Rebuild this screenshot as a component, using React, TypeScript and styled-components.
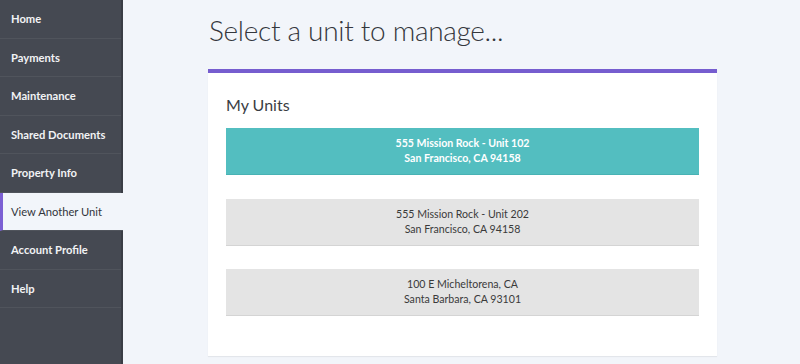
import styled, { createGlobalStyle } from 'styled-components'

const GlobalStyle = createGlobalStyle`
  html, body {
    margin: 0;
    padding: 0;
    background: #f2f5fa;
  }
  body {
    font-family: Lato, 'Open Sans', sans-serif;
  }
`

interface Unit {
  id: string
  street: string
  city: string
}

const navItems = [
  'Home',
  'Payments',
  'Maintenance',
  'Shared Documents',
  'Property Info',
  'View Another Unit',
  'Account Profile',
  'Help',
]

const units: Unit[] = [
  { id: '102', street: '555 Mission Rock - Unit 102', city: 'San Francisco, CA 94158' },
  { id: '202', street: '555 Mission Rock - Unit 202', city: 'San Francisco, CA 94158' },
  { id: 'sb', street: '100 E Micheltorena, CA', city: 'Santa Barbara, CA 93101' },
]

export default function App() {
  const activeNav = 'View Another Unit'
  const selectedUnit = '102'

  return (
    <>
      <GlobalStyle />
      <Layout>
        <Sidebar>
          {navItems.map((item) => (
            <NavItem key={item} $active={item === activeNav}>
              {item}
            </NavItem>
          ))}
        </Sidebar>

        <Main>
          <Title>Select a unit to manage...</Title>
          <Card>
            <CardTitle>My Units</CardTitle>
            <UnitList>
              {units.map((unit) => (
                <UnitButton key={unit.id} $selected={unit.id === selectedUnit}>
                  <span>{unit.street}</span>
                  <span>{unit.city}</span>
                </UnitButton>
              ))}
            </UnitList>
          </Card>
        </Main>
      </Layout>
    </>
  )
}

const Layout = styled.div`
  display: flex;
  width: 800px;
  height: 364px;
  overflow: hidden;
`

const Sidebar = styled.nav`
  display: flex;
  flex-direction: column;
  width: 121px;
  flex-shrink: 0;
  background: #454952;
  border-right: 2px solid #3a3d45;
`

const NavItem = styled.div<{ $active?: boolean }>`
  display: flex;
  align-items: center;
  height: 37.5px;
  padding-left: ${({ $active }) => ($active ? '8px' : '11px')};
  border-bottom: 1px solid #50545c;
  border-left: ${({ $active }) => ($active ? '3px solid #7b5fd3' : 'none')};
  background: ${({ $active }) => ($active ? '#f2f5fa' : 'transparent')};
  color: ${({ $active }) => ($active ? '#33363c' : '#f2f3f5')};
  font-size: 11.2px;
  font-weight: ${({ $active }) => ($active ? 400 : 700)};
  margin-right: ${({ $active }) => ($active ? '-2px' : '0')};
`

const Main = styled.main`
  display: flex;
  flex-direction: column;
  padding: 12px 0 0 85px;
  width: 509px;
`

const Title = styled.h1`
  margin: 0 0 20px 1px;
  font-size: 28px;
  line-height: 37px;
  font-weight: 300;
  color: #34373d;
  letter-spacing: -0.3px;
`

const Card = styled.section`
  background: #ffffff;
  border-top: 4px solid #765dcf;
  padding: 21px 18px 40px;
  box-shadow: 0 1px 1px rgba(0, 0, 0, 0.06);
`

const CardTitle = styled.h2`
  margin: 0 0 12px;
  font-size: 16px;
  line-height: 22px;
  font-weight: 400;
  color: #3a3d43;
`

const UnitList = styled.div`
  display: flex;
  flex-direction: column;
  gap: 23.5px;
`

const UnitButton = styled.div<{ $selected?: boolean }>`
  display: flex;
  flex-direction: column;
  align-items: center;
  justify-content: center;
  height: 46px;
  border-bottom: 1px solid ${({ $selected }) => ($selected ? '#48b2b4' : '#d4d4d4')};
  background: ${({ $selected }) => ($selected ? '#53bec0' : '#e4e4e4')};
  color: ${({ $selected }) => ($selected ? '#ffffff' : '#3a3a3a')};
  font-size: 10.6px;
  line-height: 15px;
  font-weight: ${({ $selected }) => ($selected ? 700 : 400)};
`
